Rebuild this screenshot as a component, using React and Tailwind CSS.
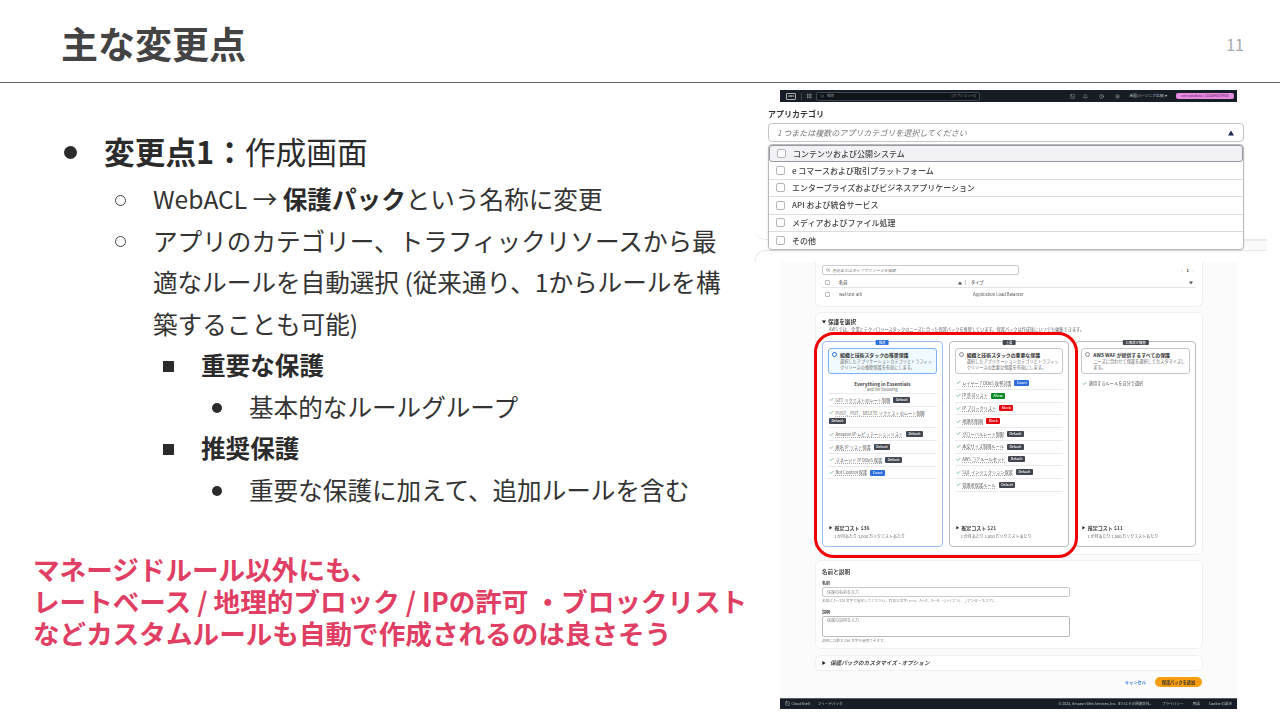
import React from "react";
import { Check, Search, Bell, Settings, CircleHelp, SquareTerminal, Grip } from "lucide-react";

const categories = [
  "コンテンツおよび公開システム",
  "e コマースおよび取引プラットフォーム",
  "エンタープライズおよびビジネスアプリケーション",
  "API および統合サービス",
  "メディアおよびファイル処理",
  "その他",
];

const recommended = [
  { text: "GET リクエストのレート制限", tag: "Default" },
  { text: "POST、PUT、DELETE リクエストのレート制限", tag: "Default", wrap: true },
  { text: "Amazon IP レピュテーションリスト", tag: "Default" },
  { text: "匿名 IP リスト保護", tag: "Default" },
  { text: "マネージド IP DDoS 保護", tag: "Default" },
  { text: "Bot Control 保護", tag: "Count" },
];

const essential = [
  { text: "レイヤー 7 DDoS 攻撃対策", tag: "Count" },
  { text: "IP 許可リスト", tag: "Allow" },
  { text: "IP ブロックリスト", tag: "Block" },
  { text: "地理的制限", tag: "Block" },
  { text: "グローバルレート制限", tag: "Default" },
  { text: "本文サイズ制限ルール", tag: "Default" },
  { text: "AWS コアルールセット", tag: "Default" },
  { text: "SQL インジェクション保護", tag: "Default" },
  { text: "管理者保護ルール", tag: "Default" },
];

function Tri({ dir = "down", size = 4, className = "" }) {
  const pts = { down: "0,1 10,1 5,9", up: "0,9 10,9 5,1", right: "1,0 9,5 1,10" };
  return (
    <svg viewBox="0 0 10 10" width={size} height={size} className={className}>
      <polygon points={pts[dir]} fill="currentColor" />
    </svg>
  );
}

function Tag({ kind }) {
  const color =
    kind === "Default" ? "bg-[#424650]" : kind === "Count" ? "bg-[#2b6fdf]" : kind === "Allow" ? "bg-[#0b8a26]" : "bg-[#e2070f]";
  return (
    <span className={`inline-block shrink-0 h-[6px] px-[2.5px] rounded-[1px] text-white text-[3.4px] leading-[6px] font-medium ${color}`}>
      {kind}
    </span>
  );
}

function RuleRow({ text, tag, wrap, plain }) {
  if (wrap) {
    return (
      <div className="h-[21.7px] border-b border-[#e9ebed] pt-[2.5px] pl-[1px]">
        <div className="flex items-center gap-[1.5px] h-[7px]">
          <Check size={5} strokeWidth={3} className="text-[#3c9d5a] shrink-0" />
          <span className="text-[4.2px] text-[#555] underline decoration-dotted decoration-[#aaaaaa] whitespace-nowrap">{text}</span>
        </div>
        <div className="flex mt-[1.5px]">
          <Tag kind={tag} />
        </div>
      </div>
    );
  }
  return (
    <div className={`h-[12.75px] flex items-center gap-[1.5px] pl-[1px] ${plain ? "" : "border-b border-[#e9ebed]"}`}>
      <Check size={5} strokeWidth={3} className="text-[#3c9d5a] shrink-0" />
      <span className={`text-[4.2px] text-[#555] whitespace-nowrap ${plain ? "" : "underline decoration-dotted decoration-[#aaaaaa]"}`}>{text}</span>
      {tag && <span className="ml-[1.5px] flex"><Tag kind={tag} /></span>}
    </div>
  );
}

function PlanCard({ title, desc, selected }) {
  return (
    <div className={`h-[26px] rounded-[3px] border px-[3px] pt-[2.5px] ${selected ? "border-[#7db0f5] bg-[#f0fbff]" : "border-[#c6c6cd] bg-white"}`}>
      <div className="flex items-center gap-[3px] h-[7px]">
        <span className={`w-[5px] h-[5px] rounded-full shrink-0 ${selected ? "border-[1.5px] border-[#1f6fe0] bg-white" : "border-[0.5px] border-[#8c8c94]"}`} />
        <span className="text-[4.9px] font-bold text-[#333] whitespace-nowrap">{title}</span>
      </div>
      <p className="text-[4.2px] leading-[6.2px] text-[#666] pl-[8px]">{desc}</p>
    </div>
  );
}

function Cost({ price }) {
  return (
    <div className="mt-auto pb-[7px] pl-[1px]">
      <div className="flex items-center gap-[2px] h-[6px] text-[5px] font-semibold text-[#444]">
        <Tri dir="right" size={3.5} className="text-[#16191f]" />
        推定コスト {price}
      </div>
      <div className="mt-[2px] h-[6px] pl-[5px] text-[4px] leading-[6px] text-[#666]">1 か月あたり 1,000 万リクエストあたり</div>
    </div>
  );
}

function PlanColumn({ label, labelClass, borderClass, children }) {
  return (
    <div className={`relative flex-1 flex flex-col border rounded-[4px] px-[5px] pt-[5.5px] bg-white ${borderClass}`}>
      <span className={`absolute -top-[2.5px] left-1/2 -translate-x-1/2 h-[5px] px-[3px] rounded-[1px] text-[3.4px] leading-[5px] text-white whitespace-nowrap ${labelClass}`}>
        {label}
      </span>
      {children}
    </div>
  );
}

function TopScreenshot() {
  return (
    <div className="relative w-[512px] h-[172px] blur-[0.35px]">
      {/* faint cards behind the dropdown */}
      <div className="absolute left-0 right-0 top-[112px] h-[38px] border-b border-[#e9e9ea] rounded-bl-[10px]" />
      <div className="absolute left-0 right-0 top-[160px] h-[12px] border-t border-l border-[#e9e9ea] rounded-tl-[10px]" />
      <div className="absolute right-0 w-[23px] top-[150px] h-[10px] bg-[#fafafa] border-t border-[#e9e9ea]" />

      <div className="relative ml-[25px] w-[457px] h-[12px] bg-[#161d26] flex items-center text-[#c9ccd2] text-[3.6px]">
        <span className="ml-[6px] w-[10px] h-[7px] rounded-[1px] border border-[#aeb2b8] text-[3px] leading-[5px] text-center font-bold">aws</span>
        <span className="ml-[5px] w-px h-[7px] bg-[#3c434d]" />
        <Grip size={6} className="ml-[4px] text-[#aeb2b8]" />
        <div className="ml-[4px] w-[164px] h-[9px] flex items-center justify-between px-[3px] rounded-[2px] border border-[#414750] bg-[#0f141a]">
          <span className="flex items-center gap-[3px] text-[#8d939b]">
            <Search size={4} />
            検索
          </span>
          <span className="text-[#8d939b]">[オプション+S]</span>
        </div>
        <div className="ml-auto flex items-center">
          <SquareTerminal size={5} className="text-[#aeb2b8]" />
          <Bell size={5} className="ml-[8px] text-[#aeb2b8]" />
          <CircleHelp size={5} className="ml-[11px] text-[#aeb2b8]" />
          <Settings size={5} className="ml-[11px] text-[#aeb2b8]" />
          <span className="ml-[9px] whitespace-nowrap">米国(バージニア北部) ▾</span>
          <span className="ml-[9px] mr-[3px] w-[58px] h-[6px] rounded-[2px] bg-[#e98ae2] text-[#5b2358] leading-[6px] text-center whitespace-nowrap">
            cm-sandbox | 152584537958
          </span>
        </div>
      </div>

      <div className="relative ml-[13px] w-[476px]">
        <div className="h-[8px] mt-[8px] text-[8px] leading-[8px] font-semibold text-[#333]">アプリカテゴリ</div>
        <div className="mt-[5px] h-[19px] flex items-center justify-between pl-[8px] pr-[9px] rounded-[4px] border border-[#c4c4c8] bg-white">
          <span className="text-[8px] italic text-[#777]">1 つまたは複数のアプリカテゴリを選択してください</span>
          <Tri dir="up" size={6} className="text-[#1b2a4a]" />
        </div>
        <div className="mt-[2px] border border-[#b9b9bd] rounded-[4px] bg-white shadow-sm">
          {categories.map((c, i) => (
            <div
              key={c}
              className={`h-[17.4px] flex items-center gap-[7px] pl-[7px] text-[8px] font-medium text-[#444] ${
                i === 0 ? "bg-[#f2f2f6] border border-[#98989e] rounded-[3px]" : i < 5 ? "border-b border-[#dcdcdf]" : ""
              }`}
            >
              <span className="w-[9px] h-[9px] rounded-[2px] border border-[#b4b4b9] bg-white shrink-0" />
              {c}
            </div>
          ))}
        </div>
      </div>
    </div>
  );
}

function BottomScreenshot() {
  return (
    <div className="relative ml-[25px] w-[457px] h-[447px] bg-[#fbfbfb] flex flex-col text-[#444]">
      <div className="flex flex-col flex-1 blur-[0.35px]">
        {/* resources */}
        <div className="ml-[35px] w-[388px] h-[45px] px-[6px] pt-[3px] bg-white rounded-b-[6px] border-x border-b border-[#efeff0]">
          <div className="flex items-center justify-between">
            <div className="w-[197px] h-[10px] flex items-center gap-[2px] px-[3px] rounded-[2px] border border-[#c9c9cf]">
              <Search size={4} className="text-[#555]" />
              <span className="text-[4px] italic text-[#777]">名前またはタイプでリソースを検索</span>
            </div>
            <div className="flex gap-[4px] text-[4px] text-[#777] pr-[2px]">
              <span>‹</span>
              <b className="text-[#444]">1</b>
              <span>›</span>
            </div>
          </div>
          <div className="mt-[3px] h-[10px] flex items-center border-b border-[#e4e4e6] text-[4.2px] font-medium text-[#555]">
            <span className="w-[5px] h-[5px] ml-[3px] rounded-[1px] border border-[#bbb]" />
            <span className="ml-[9px] w-[119px]">名前</span>
            <Tri dir="up" size={4} className="text-[#444]" />
            <span className="ml-[3px] mr-[3px] w-px h-[5px] bg-[#ccc]" />
            <span className="ml-[2px]">タイプ</span>
            <Tri dir="down" size={4} className="ml-auto mr-[3px] text-[#555]" />
          </div>
          <div className="h-[12px] flex items-center text-[4.2px] text-[#555]">
            <span className="w-[5px] h-[5px] ml-[3px] rounded-[1px] border border-[#bbb]" />
            <span className="ml-[9px] w-[132px]">waf-test-alb</span>
            <span className="ml-[2px]">Application Load Balancer</span>
          </div>
        </div>

        {/* protection pack */}
        <div className="mt-[5px] ml-[35px] w-[388px] h-[243px] flex flex-col px-[6px] pt-[5px] pb-[7px] bg-white rounded-[6px] border border-[#efeff0]">
          <div className="flex items-center gap-[2px] h-[8px] text-[5.6px] font-semibold text-[#333]">
            <Tri dir="down" size={4} className="text-[#16191f]" />
            保護を選択
          </div>
          <p className="h-[6px] pl-[7px] text-[4.2px] leading-[6px] text-[#666] whitespace-nowrap">
            AWS では、企業とテクノロジースタックのニーズに合った保護パックを推奨しています。保護パックは作成後にいつでも編集できます。
          </p>
          <div className="mt-[9px] flex-1 flex gap-[6px]">
            <PlanColumn label="推奨" labelClass="bg-[#2b6fdf]" borderClass="border-[#9bbdf2]">
              <PlanCard
                selected
                title="組織と技術スタックの推奨保護"
                desc="選択したアプリケーションカテゴリとトラフィックリソースの推奨保護を有効にします。"
              />
              <div className="mt-[6.5px] h-[7px] text-center text-[4.8px] leading-[7px] font-semibold text-[#444]">Everything in Essentials</div>
              <div className="h-[7px] text-center text-[3.8px] leading-[6px] text-[#666] border-b border-[#e9ebed]">and the following</div>
              {recommended.map((r) => (
                <RuleRow key={r.text} {...r} />
              ))}
              <Cost price="$36" />
            </PlanColumn>
            <PlanColumn label="重要" labelClass="bg-[#424650]" borderClass="border-[#b9b9be]">
              <PlanCard title="組織と技術スタックの重要な保護" desc="選択したアプリケーションカテゴリとトラフィックリソースの重要な保護を有効にします。" />
              <div className="mt-[3.5px]">
                {essential.map((r) => (
                  <RuleRow key={r.text} {...r} />
                ))}
              </div>
              <Cost price="$21" />
            </PlanColumn>
            <PlanColumn label="お客様が構築" labelClass="bg-[#424650]" borderClass="border-[#b9b9be]">
              <PlanCard title="AWS WAF が提供するすべての保護" desc="ニーズに合わせて保護を選択してカスタマイズします。" />
              <div className="mt-[3.5px]">
                <RuleRow plain text="適用するルールを自分で選択" />
              </div>
              <Cost price="$11" />
            </PlanColumn>
          </div>
        </div>

        {/* name and description */}
        <div className="mt-[5px] ml-[35px] w-[388px] h-[89px] px-[6px] pt-[7px] bg-white rounded-[6px] border border-[#efeff0]">
          <div className="h-[8px] text-[5.6px] leading-[8px] font-semibold text-[#444]">名前と説明</div>
          <div className="mt-[4px] h-[6px] text-[4px] leading-[6px] font-semibold text-[#444]">名前</div>
          <div className="mt-[1px] w-[248px] h-[10px] px-[4px] rounded-[2px] border border-[#c9c9cf] text-[4px] leading-[8px] text-[#888]">保護の名前を入力</div>
          <div className="mt-[1px] h-[6px] text-[3.6px] leading-[6px] text-[#888] whitespace-nowrap">
            名前は 1〜128 文字で指定してください。有効な文字: a〜z、A〜Z、0〜9、-(ハイフン)、_(アンダースコア)。
          </div>
          <div className="mt-[5px] h-[6px] text-[4px] leading-[6px] font-semibold text-[#444]">説明</div>
          <div className="mt-[1px] w-[248px] h-[21px] px-[4px] rounded-[2px] border border-[#b9b9bf] text-[4px] leading-[7px] text-[#888]">保護の説明を入力</div>
          <div className="mt-[1px] h-[6px] text-[3.6px] leading-[6px] text-[#888]">説明には最大 256 文字を使用できます。</div>
        </div>

        {/* customize */}
        <div className="mt-[6px] ml-[35px] w-[388px] h-[16px] flex items-center gap-[2px] px-[6px] bg-white rounded-[6px] border border-[#efeff0] text-[5.6px] font-semibold italic text-[#444]">
          <Tri dir="right" size={4} className="text-[#16191f]" />
          <span className="ml-[2px]">保護パックのカスタマイズ - オプション</span>
        </div>

        {/* buttons */}
        <div className="mt-[6px] ml-[35px] w-[387px] h-[10px] flex items-center justify-end gap-[9px]">
          <span className="text-[4.2px] font-semibold text-[#3b82e0]">キャンセル</span>
          <span className="w-[47px] h-[10px] rounded-full bg-[#f79d0e] text-center text-[4.2px] leading-[10px] font-semibold text-[#333]">保護パックを追加</span>
        </div>

        {/* footer */}
        <div className="mt-auto h-[11px] flex items-center justify-between px-[5px] bg-[#161d26] border-t border-[#5a5f66] text-[3.6px] text-[#c2c5ca]">
          <div className="flex items-center gap-[8px]">
            <span className="flex items-center gap-[1.5px]">
              <SquareTerminal size={5} />
              CloudShell
            </span>
            <span>フィードバック</span>
          </div>
          <div className="flex items-center gap-[9px]">
            <span>© 2025, Amazon Web Services, Inc. またはその関連会社。</span>
            <span>プライバシー</span>
            <span>用語</span>
            <span>Cookie の設定</span>
          </div>
        </div>
      </div>

      {/* red annotation */}
      <div className="absolute left-[34px] top-[70px] w-[264px] h-[226px] border-[3px] border-[#f10000] rounded-[20px]" />
    </div>
  );
}

function Bullet({ kind }) {
  if (kind === "disc") return <span className="w-[13px] h-[13px] mt-[3px] rounded-full bg-[#2b2b2b]" />;
  if (kind === "circle") return <span className="w-[11px] h-[11px] ml-[3px] mt-[3px] rounded-full border border-[#444]" />;
  if (kind === "square") return <span className="w-[11px] h-[11px] ml-[3px] mt-[3px] bg-[#2b2b2b]" />;
  return <span className="w-[10px] h-[10px] ml-[4px] mt-[3px] rounded-full bg-[#2b2b2b]" />;
}

function Row({ bullet, left, children }) {
  return (
    <div className={`flex whitespace-nowrap ${left}`}>
      <span className="w-[41px] h-[41.5px] flex items-center">
        <Bullet kind={bullet} />
      </span>
      <div>{children}</div>
    </div>
  );
}

export default function App() {
  return (
    <div className="w-[1280px] h-[720px] overflow-hidden bg-white flex flex-col font-['Noto_Sans_CJK_JP','Noto_Sans',sans-serif]">
      <header className="h-[83px] shrink-0 border-b border-[#666666] flex items-center justify-between pl-[61px] pr-[36px]">
        <h1 className="text-[37px] font-bold text-[#434343] mt-[5px] leading-none">主な変更点</h1>
        <span className="text-[16px] text-[#a9a9a9] mt-[5px]">11</span>
      </header>

      <div className="flex flex-1 min-h-0">
        <main className="w-[755px] shrink-0 pt-[44px]">
          <div className="flex items-center h-[48px] pl-[64px] whitespace-nowrap text-[#2b2b2b]">
            <span className="w-[40px] flex items-center">
              <Bullet kind="disc" />
            </span>
            <span className="text-[30.7px]">
              <b>変更点1：</b>作成画面
            </span>
          </div>
          <div className="mt-[3px] text-[24.6px] leading-[41.5px] text-[#333333]">
            <Row bullet="circle" left="pl-[112px]">
              WebACL → <b className="text-[#2b2b2b]">保護パック</b>という名称に変更
            </Row>
            <Row bullet="circle" left="pl-[112px]">
              アプリのカテゴリー、トラフィックリソースから最
              <br />
              適なルールを自動選択 (従来通り、1からルールを構
              <br />
              築することも可能)
            </Row>
            <Row bullet="square" left="pl-[160px]">
              <b className="text-[#2b2b2b]">重要な保護</b>
            </Row>
            <Row bullet="dot" left="pl-[208px]">
              基本的なルールグループ
            </Row>
            <Row bullet="square" left="pl-[160px]">
              <b className="text-[#2b2b2b]">推奨保護</b>
            </Row>
            <Row bullet="dot" left="pl-[208px]">
              重要な保護に加えて、追加ルールを含む
            </Row>
          </div>
          <p className="mt-[43px] pl-[33px] text-[26.6px] leading-[32px] font-bold text-[#e03e62] whitespace-nowrap">
            マネージドルール以外にも、
            <br />
            レートベース / 地理的ブロック / IPの許可 ・ブロックリスト
            <br />
            などカスタムルールも自動で作成されるのは良さそう
          </p>
        </main>

        <aside className="w-[512px] shrink-0 pt-[7px]">
          <TopScreenshot />
          <BottomScreenshot />
        </aside>
      </div>
    </div>
  );
}
